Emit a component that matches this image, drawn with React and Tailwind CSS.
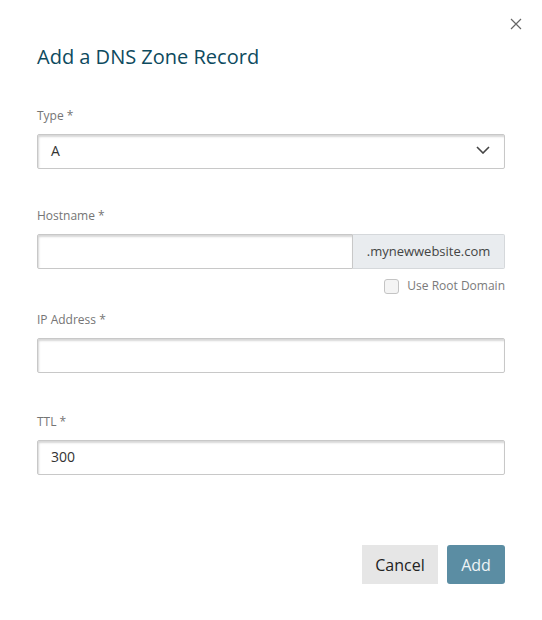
import { useState } from 'react'

function Label({ children }) {
  return <div className="text-[12px] leading-4 text-[#757575] mb-[10px]">{children}</div>
}

const inputBox =
  'h-[35px] border border-[#c8c8c8] rounded-[2px] bg-white shadow-[inset_1px_2px_2px_rgba(0,0,0,0.16)]'

export default function App() {
  const [rootDomain, setRootDomain] = useState(false)

  return (
    <div className="w-[542px] h-[620px] bg-white relative font-['Open_Sans',sans-serif] text-[#333]">
      <button
        className="absolute right-[20px] top-[18px] w-[12px] h-[12px] text-[#666]"
        aria-label="Close"
      >
        <svg width="12" height="12" viewBox="0 0 12 12" fill="none" stroke="currentColor" strokeWidth="1.2">
          <path d="M1 1l10 10M11 1L1 11" />
        </svg>
      </button>

      <div className="px-[37px] pt-[43px]">
        <h2 className="text-[20px] leading-7 text-[#0d4a5e]">Add a DNS Zone Record</h2>

        <div className="mt-[37px]">
          <Label>Type *</Label>
          <div className={`${inputBox} flex items-center justify-between pl-[13px] pr-[14px] pb-[3px]`}>
            <span className="text-[14px]">A</span>
            <svg width="14" height="8" viewBox="0 0 14 8" fill="none" stroke="#444" strokeWidth="1.6">
              <path d="M1 1l6 6 6-6" />
            </svg>
          </div>
        </div>

        <div className="mt-[39px]">
          <Label>Hostname *</Label>
          <div className="flex">
            <div className={`${inputBox} flex-1 rounded-r-none`} />
            <div className="h-[35px] w-[152px] flex items-center justify-center bg-[#e9ecef] border border-l-0 border-[#d5d8db] rounded-r-[2px] text-[13px] text-[#444]">
              .mynewwebsite.com
            </div>
          </div>
          <label className="flex items-center justify-end gap-[8px] mt-[9px] cursor-pointer">
            <span
              onClick={() => setRootDomain(!rootDomain)}
              className="w-[15px] h-[15px] border border-[#c4c4c4] rounded-[3px] bg-[#f4f4f4]"
            />
            <span className="text-[12px] leading-4 text-[#7a7a7a]">Use Root Domain</span>
          </label>
        </div>

        <div className="mt-[18px]">
          <Label>IP Address *</Label>
          <div className={inputBox} />
        </div>

        <div className="mt-[41px]">
          <Label>TTL *</Label>
          <div className={`${inputBox} flex items-center pl-[13px] pb-[3px]`}>
            <span className="text-[14px]">300</span>
          </div>
        </div>

        <div className="flex justify-end gap-[9px] mt-[70px]">
          <button className="h-[39px] w-[76px] bg-[#e6e6e6] text-[16px] text-[#222]">Cancel</button>
          <button className="h-[39px] w-[58px] bg-[#5b8da3] rounded-[3px] text-[16px] text-[#eef4f7]">Add</button>
        </div>
      </div>
    </div>
  )
}
